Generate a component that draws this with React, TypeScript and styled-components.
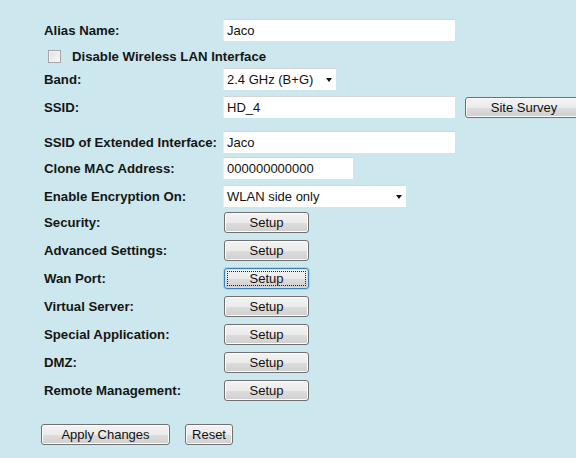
import React from "react";
import styled, { createGlobalStyle, css } from "styled-components";

const GlobalStyle = createGlobalStyle`
  html, body {
    margin: 0;
    padding: 0;
    background: #cce8ee;
    overflow: hidden;
  }
  body {
    font-family: "Liberation Sans", Arial, sans-serif;
    color: #111;
  }
`;

const Form = styled.div`
  display: flex;
  flex-direction: column;
  padding: 19px 0 0 44px;
  width: 576px;
  box-sizing: border-box;
`;

const Row = styled.div<{ $gap?: number; $indent?: number }>`
  display: flex;
  align-items: center;
  height: 22px;
  margin-top: ${(p) => p.$gap ?? 0}px;
  margin-left: ${(p) => p.$indent ?? 0}px;
  white-space: nowrap;
`;

const Label = styled.div`
  width: 179px;
  flex-shrink: 0;
  font-size: 13.2px;
  font-weight: bold;
  color: #151515;
`;

const TextBox = styled.div<{ $width: number }>`
  width: ${(p) => p.$width}px;
  height: 22px;
  box-sizing: border-box;
  background: #fff;
  border-top: 1px solid #d6d6d6;
  border-left: 1px solid #ececec;
  padding: 0 3px;
  font-size: 13px;
  line-height: 21px;
  flex-shrink: 0;
`;

const SelectBox = styled(TextBox)`
  position: relative;
  &::after {
    content: "";
    position: absolute;
    right: 4px;
    top: 9px;
    border-left: 3.5px solid transparent;
    border-right: 3.5px solid transparent;
    border-top: 4px solid #111;
  }
`;

const Check = styled.span`
  display: inline-block;
  width: 13px;
  height: 13px;
  box-sizing: border-box;
  border: 1px solid #a4a4a4;
  background: linear-gradient(135deg, #e0e0e0, #fafafa);
  box-shadow: inset 0 0 0 1px #f4f4f4;
  margin-right: 11px;
`;

const CheckLabel = styled.span`
  font-size: 13.2px;
  font-weight: bold;
  color: #151515;
`;

const Button = styled.div<{ $width: number; $focused?: boolean; $margin?: number }>`
  position: relative;
  width: ${(p) => p.$width}px;
  height: 21px;
  margin-left: ${(p) => p.$margin ?? 0}px;
  box-sizing: border-box;
  border: 1px solid #707070;
  border-radius: 3px;
  background: linear-gradient(
    to bottom,
    #f3f3f3 0%,
    #ebebeb 50%,
    #dddddd 51%,
    #cfcfcf 100%
  );
  box-shadow: inset 0 0 0 1px #fcfcfc;
  font-size: 13px;
  line-height: 19px;
  text-align: center;
  flex-shrink: 0;
  ${(p) =>
    p.$focused &&
    css`
      border-color: #3c7fb1;
      box-shadow: inset 0 0 0 1px #bfe2f7, 0 0 0 1px #a9d4ee;
      &::after {
        content: "";
        position: absolute;
        inset: 2px;
        border: 1px dotted #222;
      }
    `}
`;

const setupRows = [
  "Security:",
  "Advanced Settings:",
  "Wan Port:",
  "Virtual Server:",
  "Special Application:",
  "DMZ:",
  "Remote Management:",
];

export default function App() {
  return (
    <>
      <GlobalStyle />
      <Form>
        <Row>
          <Label>Alias Name:</Label>
          <TextBox $width={232}>Jaco</TextBox>
        </Row>
        <Row $gap={4} $indent={4}>
          <Check />
          <CheckLabel>Disable Wireless LAN Interface</CheckLabel>
        </Row>
        <Row $gap={1}>
          <Label>Band:</Label>
          <SelectBox $width={113}>2.4 GHz (B+G)</SelectBox>
        </Row>
        <Row $gap={6}>
          <Label>SSID:</Label>
          <TextBox $width={232}>HD_4</TextBox>
          <Button $width={118} $margin={10}>
            Site Survey
          </Button>
        </Row>
        <Row $gap={13}>
          <Label>SSID of Extended Interface:</Label>
          <TextBox $width={232}>Jaco</TextBox>
        </Row>
        <Row $gap={4}>
          <Label>Clone MAC Address:</Label>
          <TextBox $width={130}>000000000000</TextBox>
        </Row>
        <Row $gap={6}>
          <Label>Enable Encryption On:</Label>
          <SelectBox $width={183}>WLAN side only</SelectBox>
        </Row>
        {setupRows.map((label, i) => (
          <Row key={label} $gap={i === 0 ? 4 : 6}>
            <Label>{label}</Label>
            <Button $width={85} $margin={1} $focused={label === "Wan Port:"}>
              Setup
            </Button>
          </Row>
        ))}
        <Row $gap={22} $indent={-3}>
          <Button $width={129}>Apply Changes</Button>
          <Button $width={48} $margin={15}>
            Reset
          </Button>
        </Row>
      </Form>
    </>
  );
}
